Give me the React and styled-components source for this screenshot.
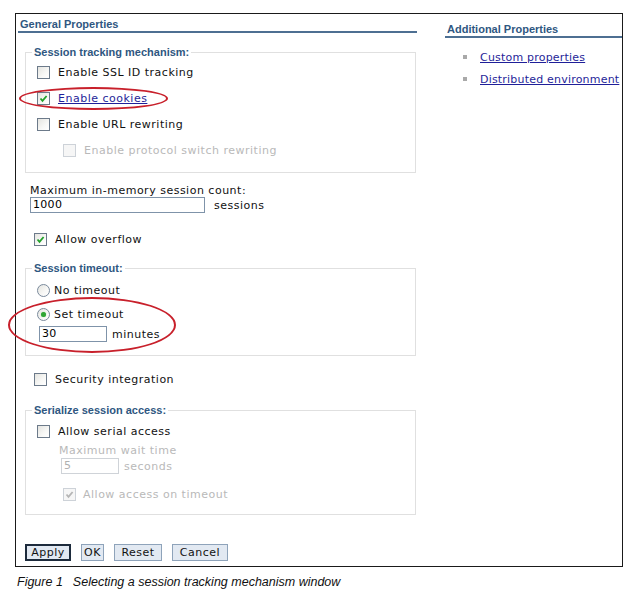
import styled, { createGlobalStyle } from "styled-components";

const GlobalStyle = createGlobalStyle`
	body {
		margin: 0;
		background: #fff;
		font-family: "DejaVu Sans", Verdana, sans-serif;
		font-size: 11px;
		color: #111;
	}
`;

const Page = styled.div`
	padding: 13px 0 0 15px;
`;

const Frame = styled.div`
	box-sizing: border-box;
	width: 608px;
	height: 554px;
	border: 1px solid #1a1a1a;
	padding-top: 2px;
	display: flex;
	gap: 28px;
`;

const LeftCol = styled.div`
	width: 401px;
	flex-shrink: 0;
	display: flex;
	flex-direction: column;
`;

const RightCol = styled.div`
	flex: 1;
	min-width: 0;
	margin-top: 5px;
	white-space: nowrap;
	overflow: hidden;
`;

const SectionTitle = styled.div`
	font-family: "Liberation Sans", Arial, sans-serif;
	font-weight: bold;
	font-size: 11px;
	line-height: 13px;
	color: #2f5781;
	padding: 2px 0 0 2px;
	margin-left: ${(p) => p.$inset || 0}px;
	border-bottom: 2px solid #4d6f92;
`;

const Group = styled.fieldset`
	box-sizing: border-box;
	width: 391px;
	min-width: 0;
	margin: ${(p) => p.$top}px 0 0 9px;
	padding: ${(p) => p.$padTop || 0}px 0 ${(p) => p.$padBottom}px 6px;
	border: 1px solid #e0e0e0;
	display: flex;
	flex-direction: column;
	align-items: flex-start;
`;

const Legend = styled.legend`
	font-family: "Liberation Sans", Arial, sans-serif;
	font-weight: bold;
	font-size: 11px;
	line-height: 13px;
	color: #2f5781;
	padding: 0 2px;
`;

const Row = styled.label`
	display: flex;
	align-items: center;
	gap: ${(p) => (p.$gap !== undefined ? p.$gap : 8)}px;
	height: ${(p) => p.$h || 26}px;
	margin: ${(p) => p.$top || 0}px 0 0 ${(p) => p.$indent || 0}px;
	letter-spacing: 0.5px;
	color: ${(p) => (p.$disabled ? "#b9b9b9" : "#111")};
`;

const Box = styled.span`
	box-sizing: border-box;
	width: 13px;
	height: 13px;
	flex-shrink: 0;
	border: 1px solid ${(p) => (p.$disabled ? "#cdd2d8" : "#6c7a8a")};
	background: ${(p) =>
		p.$disabled
			? "#f6f6f6"
			: "linear-gradient(135deg, #e4e4e0 0%, #f8f8f6 60%, #ffffff 100%)"};
	display: flex;
	align-items: center;
	justify-content: center;
`;

const Round = styled(Box)`
	border-radius: 50%;
	border-color: #7a8a9c;
`;

const Dot = styled.span`
	width: 5px;
	height: 5px;
	border-radius: 50%;
	background: #2fa534;
	box-shadow: 0 0 1px #7fd07f;
`;

const LinkText = styled.span`
	color: #1f1f99;
	text-decoration: underline;
`;

const FieldLabel = styled.div`
	line-height: 13px;
	letter-spacing: 0.5px;
	margin: ${(p) => p.$top || 0}px 0 0 ${(p) => p.$indent}px;
	color: ${(p) => (p.$disabled ? "#b9b9b9" : "#111")};
`;

const InputRow = styled.div`
	display: flex;
	align-items: center;
	gap: ${(p) => p.$gap}px;
	margin: ${(p) => p.$top || 0}px 0 0 ${(p) => p.$indent}px;
	letter-spacing: 0.5px;
	color: ${(p) => (p.$disabled ? "#b9b9b9" : "#111")};
`;

const TextBox = styled.div`
	box-sizing: border-box;
	width: ${(p) => p.$w}px;
	height: 16px;
	border: 1px solid ${(p) => (p.$disabled ? "#cfd3d8" : "#7f93a9")};
	padding-left: 2px;
	line-height: 14px;
	letter-spacing: 0.3px;
	color: ${(p) => (p.$disabled ? "#b0b0b0" : "#000")};
	background: #fff;
`;

const Highlight = styled.div`
	position: relative;
`;

const Ellipse = styled.span`
	box-sizing: border-box;
	position: absolute;
	left: ${(p) => p.$x}px;
	top: ${(p) => p.$y}px;
	width: ${(p) => p.$w}px;
	height: ${(p) => p.$h}px;
	border: 2px solid #c8202b;
	border-radius: 50%;
	pointer-events: none;
`;

const Buttons = styled.div`
	display: flex;
	gap: 10px;
	margin: 29px 0 0 9px;
`;

const Button = styled.button`
	box-sizing: border-box;
	width: ${(p) => p.$w}px;
	height: 17px;
	padding: 0;
	font-family: "DejaVu Sans", Verdana, sans-serif;
	font-size: 11px;
	letter-spacing: 0.5px;
	color: #111;
	background: #e2e9f2;
	border: ${(p) => (p.$primary ? "2px solid #1d2b3c" : "1px solid #8ea3ba")};
	border-radius: 0;
`;

const LinkList = styled.ul`
	list-style: none;
	margin: 8px 0 0;
	padding: 0 0 0 18px;
`;

const LinkItem = styled.li`
	display: flex;
	align-items: center;
	gap: 13px;
	height: 22px;
	letter-spacing: 0.2px;
`;

const Bullet = styled.span`
	width: 4px;
	height: 4px;
	background: #a9a9a9;
	flex-shrink: 0;
`;

const Caption = styled.div`
	margin: 8px 0 0 2px;
	font-family: "Liberation Sans", Arial, sans-serif;
	font-style: italic;
	font-size: 12.5px;
	line-height: 14px;
	color: #111;
`;

const Gap = styled.span`
	display: inline-block;
	width: 10px;
`;

function Check({ checked, disabled }) {
	return (
		<Box $disabled={disabled}>
			{checked && (
				<svg width="9" height="9" viewBox="0 0 9 9">
					<path
						d="M1.5 4.5 L3.5 6.8 L7.6 2"
						fill="none"
						stroke={disabled ? "#b5b5b5" : "#22a12a"}
						strokeWidth="1.8"
					/>
				</svg>
			)}
		</Box>
	);
}

function Radio({ checked }) {
	return <Round>{checked && <Dot />}</Round>;
}

function App() {
	return (
		<>
			<GlobalStyle />
			<Page>
				<Frame>
					<LeftCol>
						<SectionTitle $inset={2}>General Properties</SectionTitle>

						<Group $top={13} $padBottom={9}>
							<Legend>Session tracking mechanism:</Legend>
							<Row $indent={5}>
								<Check />
								Enable SSL ID tracking
							</Row>
							<Highlight>
								<Row $indent={5}>
									<Check checked />
									<LinkText>Enable cookies</LinkText>
								</Row>
								<Ellipse $x={-13} $y={2} $w={149} $h={23} />
							</Highlight>
							<Row $indent={5}>
								<Check />
								Enable URL rewriting
							</Row>
							<Row $indent={31} $disabled>
								<Check disabled />
								Enable protocol switch rewriting
							</Row>
						</Group>

						<FieldLabel $top={11} $indent={14}>
							Maximum in-memory session count:
						</FieldLabel>
						<InputRow $indent={14} $gap={9}>
							<TextBox $w={175}>1000</TextBox>
							sessions
						</InputRow>

						<Row $indent={18} $top={13}>
							<Check checked />
							Allow overflow
						</Row>

						<Group $top={10} $padBottom={13}>
							<Legend>Session timeout:</Legend>
							<Row $indent={5} $gap={4} $h={24} $top={3}>
								<Radio />
								No timeout
							</Row>
							<Highlight>
								<Row $indent={5} $gap={4} $h={24}>
									<Radio checked />
									Set timeout
								</Row>
								<InputRow $indent={7} $gap={5}>
									<TextBox $w={68}>30</TextBox>
									minutes
								</InputRow>
								<Ellipse $x={-24} $y={-5} $w={168} $h={56} />
							</Highlight>
						</Group>

						<Row $indent={18} $top={10}>
							<Check />
							Security integration
						</Row>

						<Group $top={12} $padTop={1} $padBottom={7}>
							<Legend>Serialize session access:</Legend>
							<Row $indent={5}>
								<Check />
								Allow serial access
							</Row>
							<FieldLabel $indent={27} $disabled>
								Maximum wait time
							</FieldLabel>
							<InputRow $indent={29} $gap={5} $top={1} $disabled>
								<TextBox $w={58} $disabled>
									5
								</TextBox>
								seconds
							</InputRow>
							<Row $indent={31} $gap={7} $top={7} $disabled>
								<Check checked disabled />
								Allow access on timeout
							</Row>
						</Group>

						<Buttons>
							<Button $primary $w={46}>
								Apply
							</Button>
							<Button $w={23}>OK</Button>
							<Button $w={48}>Reset</Button>
							<Button $w={56}>Cancel</Button>
						</Buttons>
					</LeftCol>

					<RightCol>
						<SectionTitle>Additional Properties</SectionTitle>
						<LinkList>
							<LinkItem>
								<Bullet />
								<LinkText>Custom properties</LinkText>
							</LinkItem>
							<LinkItem>
								<Bullet />
								<LinkText>Distributed environment</LinkText>
							</LinkItem>
						</LinkList>
					</RightCol>
				</Frame>
				<Caption>
					Figure 1<Gap />Selecting a session tracking mechanism window
				</Caption>
			</Page>
		</>
	);
}

export default App;
